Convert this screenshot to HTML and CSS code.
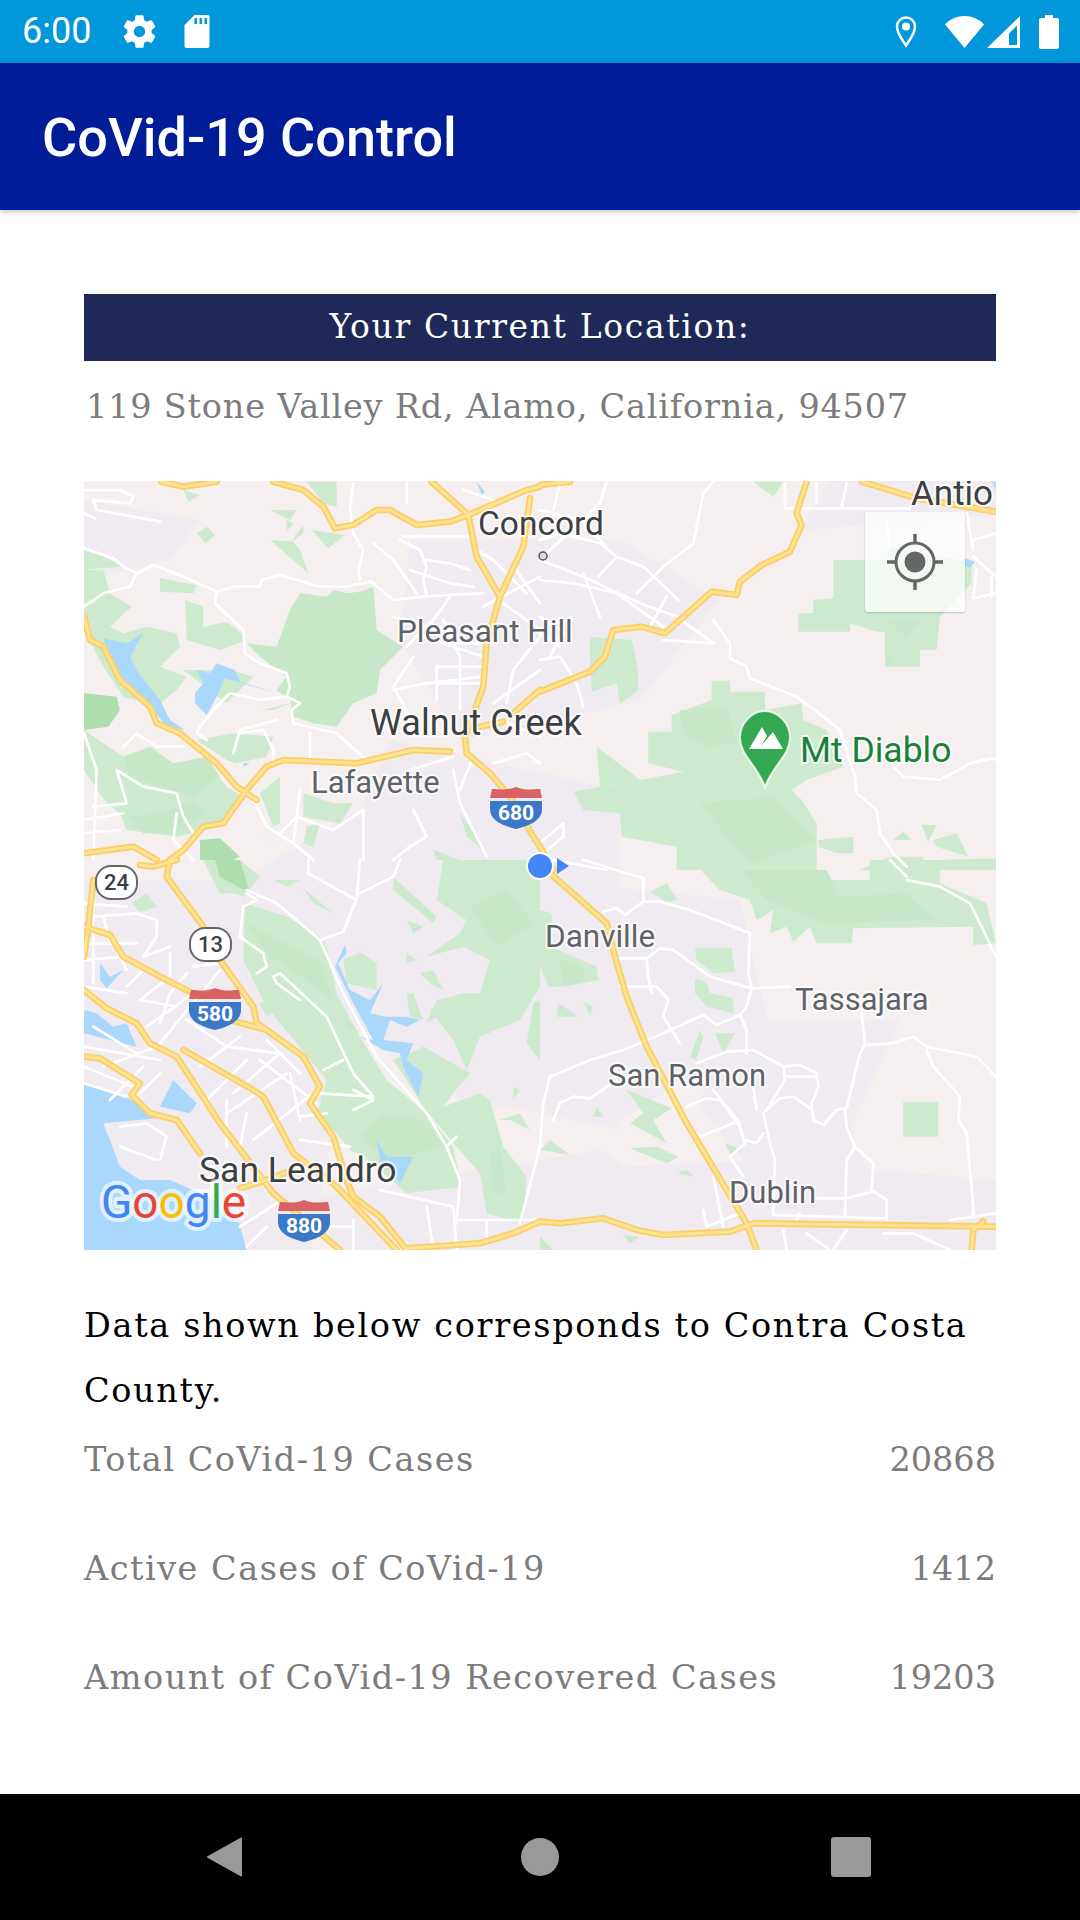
FILE: index.html
```html
<!DOCTYPE html>
<html lang="en">
<head>
<meta charset="utf-8">
<title>CoVid-19 Control</title>
<link rel="stylesheet" href="styles.css">
</head>
<body>
<div class="status">
  <div class="status-left">
    <span class="clock">6:00</span>
    <svg class="ic-gear" viewBox="0 0 24 24"><path d="M19.43 12.98c.04-.32.07-.64.07-.98s-.03-.66-.07-.98l2.11-1.65c.19-.15.24-.42.12-.64l-2-3.46c-.12-.22-.39-.3-.61-.22l-2.49 1c-.52-.4-1.08-.73-1.69-.98l-.38-2.65A.49.49 0 0 0 14 2h-4c-.25 0-.46.18-.49.42l-.38 2.65c-.61.25-1.17.59-1.69.98l-2.49-1c-.23-.09-.49 0-.61.22l-2 3.46c-.13.22-.07.49.12.64l2.11 1.65c-.04.32-.07.65-.07.98s.03.66.07.98l-2.11 1.65c-.19.15-.24.42-.12.64l2 3.46c.12.22.39.3.61.22l2.49-1c.52.4 1.08.73 1.69.98l.38 2.65c.03.24.24.42.49.42h4c.25 0 .46-.18.49-.42l.38-2.65c.61-.25 1.17-.59 1.69-.98l2.49 1c.23.09.49 0 .61-.22l2-3.46c.12-.22.07-.49-.12-.64l-2.11-1.65zM12 15.5a3.5 3.5 0 1 1 0-7 3.5 3.5 0 0 1 0 7z"/></svg>
    <svg class="ic-sd" viewBox="0 0 25 33"><path fill-rule="evenodd" d="M10 0h13a2 2 0 0 1 2 2v29a2 2 0 0 1-2 2H2a2 2 0 0 1-2-2V10zM10 3v6h2.500V3zM15 3v6h2.500V3zM20 3v6h2.500V3z"/></svg>
  </div>
  <div class="status-right">
    <svg class="ic-pin" viewBox="0 0 22 33"><path class="ic-line" d="M11 30.500C7 24.500 2 18.500 2 11.500a9 9 0 0 1 18 0c0 7-5 13-9 19z"/><circle cx="11" cy="11.500" r="4"/></svg>
    <svg class="ic-wifi" viewBox="0 0 39 33"><path d="M0 9.500C5 4 12 1 19.500 1S34 4 39 9.500L19.500 33z"/></svg>
    <svg class="ic-signal" viewBox="0 0 33 32"><path fill-rule="evenodd" d="M33 0v32H0zM30 9.500L22 17.500V29h8z"/></svg>
    <svg class="ic-batt" viewBox="0 0 20 34"><path d="M6 0h8v3h4a2 2 0 0 1 2 2v27a2 2 0 0 1-2 2H2a2 2 0 0 1-2-2V5a2 2 0 0 1 2-2h4z"/></svg>
  </div>
</div>

<header class="appbar"><h1 class="title">CoVid-19 Control</h1></header>

<main class="content">
  <h2 class="loc-head">Your Current Location:</h2>
  <p class="address">119 Stone Valley Rd, Alamo, California, 94507</p>

  <div class="map">
    <svg class="map-svg" viewBox="84 481 912 769">
      <defs>
        <g id="hw">
          <path transform="translate(60 470) scale(.3333)" d="M305 35 370 50 470 35M640 35 730 60 790 110 825 175 880 165 950 120 990 120 1070 165 1170 155 1225 135 1400 60 1440 50M1115 35 1225 135 1250 260 1320 380 1280 520 1270 650 1215 800 1220 850 1290 910 1350 980 1420 1100 1440 1130M1410 85 1390 230 1320 380M72 440 90 510 130 530 180 630 270 710 290 760 360 790 470 880 530 950 590 990M1170 845 1060 840 890 880 670 870 620 890 560 960 490 1060 430 1070 370 1140 330 1170M72 1150 220 1130 290 1170M1440 660 1360 730M1260 770 1330 755"/>
          <path transform="translate(540 470) scale(.3333)" d="M0 45 90 35M800 35 770 130 785 165 750 245 665 285 600 335 590 375 515 365 375 490 305 470 220 480 195 560 150 605 0 665M965 35 1130 85 1368 125M0 1130 40 1200"/>
          <path transform="translate(60 860) scale(.3333)" d="M72 200 150 225 190 290 300 350 390 395M330 0 320 50 430 200M480 300 580 440 590 490 620 510 730 590 780 680 750 730 820 830 860 960 880 1010 960 1070 1040 1170M510 480 620 510M100 60 85 200 72 290M72 390 140 445 230 490 270 550 350 590 480 790 640 1000 840 1170M370 570 580 690 610 710 700 880 830 980 1010 1170M72 590 120 595 240 670 215 705 270 760 350 780 420 880M540 985 620 960 700 930M1040 1165 1260 1150 1360 1120 1440 1085M240 15 280 20 350 0"/>
          <path transform="translate(540 860) scale(.3333)" d="M30 40 110 110 200 190 225 290 260 410 320 560 440 790 560 990 620 1090 650 1170M0 1085 60 1090 190 1075 290 1110 370 1125 570 1115 640 1090 1368 1100M1295 1170 1300 1110 1330 1085"/>
        </g>
      </defs>

      <rect class="land" x="84" y="481" width="912" height="769"/>
      <path class="urban" d="M84 500 200 520 170 560 84 580zM410 540 620 540 720 600 640 700 560 720 460 740 400 640zM390 740 620 790 620 1130 420 1090 300 960 240 880 360 810zM84 880 270 880 350 1040 310 1250 84 1250zM350 900 540 880 740 900 770 1030 620 1120 500 1100zM760 1160 996 1180 996 1250 560 1250 560 1170zM830 481 996 481 996 515 800 530 830 481zM900 1020 850 1130 880 1200 770 1190 700 1110 720 1020zM300 1200 600 1150 700 1220 560 1250 340 1250z"/>

      <g class="green">
        <path transform="translate(60 470) scale(.3333)" d="M72 240 130 260 190 290 120 295 72 300zM72 300 130 300 150 370 215 410 150 470 190 490 260 470 350 490 360 530 300 590 380 620 350 660 300 700 260 700 190 680 130 590 72 480zM300 325 410 345 400 370 300 365zM375 390 430 410 430 470 500 455 545 490 560 510 480 540 380 510zM410 190 440 170 465 195 437 220zM630 120 710 120 690 150zM680 150 700 160 680 185zM730 165 695 215 730 190zM755 180 855 195 805 235zM630 210 700 215 720 240 745 310zM370 60 385 95 420 75zM740 35 830 35 830 110 790 100zM190 900 240 860 350 900 460 900 500 950 550 980 500 1050 440 1080 350 1100 200 1080 180 1030zM370 600 420 600 510 600 580 620 500 700zM410 810 520 790 640 800 620 860 530 880 500 870zM610 720 690 700 640 720zM600 970 660 920 660 1060 640 1070zM730 970 820 1000 880 1000 840 1060 730 1040zM600 1100 690 1130 660 1120zM740 1070 780 1060 760 1130 730 1120zM1120 1140 1200 1170 1130 1170zM1200 1030 1250 1100 1280 1150 1220 1100zM72 780 190 860 300 860 200 900 180 1030 140 1000 72 900z"/>
        <path transform="translate(540 470) scale(.3333)" d="M880 270 1040 270 1050 230 1295 280 1295 340 1200 440 1190 540 1140 540 1140 590 1035 590 1035 485 1010 485 930 460 930 485 775 485 775 430 820 430 820 390 880 385zM325 785 395 785 395 735 515 690 515 632 570 632 570 665 675 665 675 720 785 700 790 750 860 780 910 890 800 930 755 960 785 990 830 1060 830 1200 410 1200 410 1130 245 1100 240 1030 130 1020 100 965 300 930 430 905 325 880zM150 500 275 510 295 600 295 660 240 700 230 640 155 665 150 560zM640 35 730 35 700 80 660 50zM170 830 300 930 180 950zM1060 1110 1115 1110 1090 1085zM1145 1065 1190 1065 1165 1115zM1180 1110 1250 1090 1285 1160 1190 1130zM960 1200 1050 1160 1150 1160 1150 1200zM1195 1170 1368 1165 1368 1200 1195 1200zM835 1110 940 1100 940 1150 890 1150 835 1130z"/>
        <path transform="translate(60 860) scale(.3333)" d="M430 0 540 0 600 50 550 110 520 100 480 100zM555 130 680 170 780 230 800 260 830 400 900 530 980 660 1100 760 1180 860 1200 960 1050 1000 980 920 870 870 830 820 770 770 800 660 620 440 550 300zM640 60 720 60 680 80zM730 85 820 160 760 130zM1000 50 1130 170 1120 190 1000 90zM1150 0 1440 0 1440 380 1380 480 1260 530 1220 630 1180 540 1110 450 1200 400 1260 400 1290 300 1210 260 1100 290 1200 220 1220 180 1130 120zM850 300 900 275 950 310 950 390 860 370zM1040 180 1090 200 1060 220zM1040 280 1070 300 1040 310zM1080 340 1120 330 1150 390 1110 370zM1040 400 1060 400 1090 480 1050 470zM1130 420 1230 400 1100 490zM1000 600 1090 560 1230 640 1180 700 1150 740 1260 700 1290 720 1330 860 1400 950 1390 1090 1280 1060 1260 940 1180 850 1090 740 1040 660zM215 130 260 100 290 140 240 155zM600 430 650 415 640 460 620 470zM700 410 760 450 800 510 770 550 720 480zM790 630 870 600 880 660 830 650zM780 710 880 690 905 720 840 750 790 750zM1320 780 1380 760 1410 810 1350 780zM1360 680 1380 690 1360 720zM1420 430 1440 420 1440 600 1400 550zM880 800 960 740 1100 800 1180 880 1200 980 1040 1000 900 880z"/>
        <path transform="translate(540 860) scale(.3333)" d="M470 0 800 0 860 60 990 60 990 0 1200 0 1200 70 1340 130 1368 250 1300 255 1300 200 940 205 935 250 830 250 810 200 760 245 740 200 690 220 700 150 650 180 630 120 540 90 490 40zM0 150 35 160 35 260 170 320 175 360 70 380 25 380 0 320zM465 265 575 265 585 335 520 340 470 300zM465 355 500 365 510 400 580 415 580 460 500 440 465 400zM1090 725 1195 725 1195 830 1090 830zM260 690 395 745 340 780 380 850 270 790 310 760zM160 770 190 770 170 740zM0 870 30 840 90 885zM270 865 350 860 415 890 380 910zM410 940 440 930 465 950zM55 430 115 470 50 470zM130 425 160 440 150 465zM450 590 480 510 490 530 470 600zM525 520 585 520 550 580zM555 850 610 870 570 880zM330 95 380 70 400 100 410 120 380 125zM250 1125 300 1130 270 1150zM0 1130 40 1170 0 1170z"/>
      </g>
      <g class="green-dark">
        <path transform="translate(60 470) scale(.3333)" d="M650 530 690 420 720 370 800 380 820 360 860 370 900 365 940 350 950 480 1030 530 960 600 950 670 880 700 830 770 760 760 700 740 690 690 650 660 680 620 600 560 560 520zM270 830 340 880 440 860 480 920 400 980 300 950 210 920 190 860zM200 1040 300 1030 400 990 440 1030 350 1090 250 1090z"/>
        <path transform="translate(540 470) scale(.3333)" d="M420 720 560 710 590 820 500 830 430 790zM480 1000 700 980 780 1060 830 1110 640 1180 560 1100zM1040 450 1140 450 1100 500zM1040 560 1070 560 1040 590z"/>
        <path transform="translate(60 860) scale(.3333)" d="M1230 140 1340 90 1420 190 1310 260zM560 190 780 300 820 420 620 280zM960 760 1100 780 1150 860 1000 900 900 840zM850 470 900 520 860 500zM1290 880 1320 860 1340 1000 1300 1000z"/>
        <path transform="translate(540 860) scale(.3333)" d="M600 30 860 30 900 110 1100 100 1180 180 850 190 680 120zM60 300 130 320 130 370 70 370z"/>
      </g>
      <g class="green-deep">
        <path transform="translate(60 470) scale(.3333)" d="M72 670 170 680 180 720 145 770 72 780zM420 1110 480 1105 540 1160 520 1170 420 1170z"/>
        <path transform="translate(60 860) scale(.3333)" d="M465 0 540 0 570 100 480 50z"/>
      </g>

      <g class="water">
        <path transform="translate(60 470) scale(.3333)" d="M130 505 200 520 250 490 210 560 235 610 300 690 330 750 375 780 320 770 280 720 240 680 165 620zM410 600 450 610 470 580 525 600 540 635 620 660 650 670 495 625 465 690 440 735 405 700 405 670 430 640zM1250 35 1275 65 1265 75zM550 880 570 880 550 890z"/>
        <path transform="translate(540 470) scale(.3333)" d="M1275 265 1305 275 1290 295 1265 280zM1355 35 1368 35 1368 60z"/>
        <path transform="translate(60 860) scale(.3333)" d="M72 665 130 690 205 715 280 760 340 770 130 790 180 920 240 960 330 960 420 1000 530 1060 560 1170 72 1170zM72 450 110 460 160 500 200 490 230 560 150 540 72 520zM300 740 340 660 410 730 390 760zM855 255 860 280 835 310 870 390 930 420 970 370 930 460 975 470 1040 470 1080 480 1040 500 990 480 970 540 1060 550 1040 600 1090 640 1075 710 1030 620 1020 580 970 570 900 530 940 540 880 430 825 320zM120 310 150 350 190 330 140 385 120 360zM950 840 980 890 1060 890 1020 970 960 900z"/>
      </g>

      <g class="roads">
        <path transform="translate(60 470) scale(.3333)" d="M72 235 160 265 190 290 230 310 210 350 130 370 72 410M230 310 280 285 370 320 470 365 520 350 600 350 605 330 660 315 780 350 860 350 935 335 1000 390 1090 380 1165 375 1270 370M470 370 465 400 550 480 555 550 600 580 680 610 690 650 680 680 720 700 695 720 700 760 830 790 920 870M680 680 600 690 510 670 470 710 420 770 410 790 440 810M750 790 750 880M520 850 540 780 650 750M540 790 610 780 640 840 640 880M190 830 230 790 290 830 370 830M72 60 180 60 220 80 210 100 100 90 110 120 300 155M72 130 105 145M880 40 870 110 880 190 910 240 895 300 900 330M1020 210 1080 240 1100 290 1090 330 1100 380M1030 200 1240 200M1100 270 1170 280 1230 300M940 220 1000 270 1070 370M1170 380 1120 450 1040 530M1130 590 1270 590M1130 640 1270 640M1200 560 1200 720M1130 590 1130 690M1000 660 1100 640 1270 620M1060 560 1000 650 1050 740M1150 520 1280 520M1400 370 1300 270 1250 240M1440 500 1360 600 1340 700M1440 600 1300 700M580 990 620 1070 700 1120 760 1170M700 1120 720 960M660 1090 710 1040 820 1080 910 1020 910 1170M1000 1170 1050 1130 1100 1100 1060 1020M1180 900 1200 1000 1280 1160M72 790 110 900 100 1170M72 1050 190 1030M72 1090 180 1080M100 1010 200 1000 170 900 250 950 350 970 370 1040 400 1090M350 1030 340 1110 400 1170M1210 60 1300 90M1040 35 1040 100M1000 440 1100 470 1270 480M1050 300 1170 340 1240 350M1090 500 1270 560M1150 450 1200 560M1270 410 1440 320M1360 290 1440 400M1330 400 1440 480M1300 740 1440 800M1240 860 1200 960M1180 860 1050 900M1300 880 1400 850 1440 880"/>
        <path transform="translate(540 470) scale(.3333)" d="M200 35 180 100 20 250M520 35 490 70 460 220 370 290 290 370M0 270 130 320 300 400 410 440 520 520M0 330 100 340 230 370 370 470M130 310 180 440M0 210 60 190 180 220 230 260 175 320M230 260 310 290 415 390M380 380 330 470M520 450 570 520 570 565 620 590 630 625 770 680 850 740 900 780 945 920 950 970 1010 1020 1020 1090 1060 1150 1100 1190M0 570 60 560 110 640 130 710M370 510 520 520M735 115 1110 115M735 40 735 110M830 40 830 100M920 40 905 110M1040 150 1050 230M1280 130 1300 240M1300 210 1368 190M1300 260 1368 320M1310 300 1300 385 1368 370M1355 320 1355 380M1060 890 1090 920 1200 930 1290 880 1355 865 1368 870M0 1120 70 1060 70 1100 0 1160M40 1170 200 1200M0 120 120 150 200 230M60 40 40 120M0 440 90 500M90 440 30 560M0 490 60 530"/>
        <path transform="translate(60 860) scale(.3333)" d="M560 90 650 130 780 240 850 400 950 590 1100 760 1160 860 1190 830M1160 860 1200 960 1190 1090M780 240 850 215 880 140 890 120 745 40 745 0M890 120 900 0M900 100 1000 50 1020 0M560 100 590 120 550 140 540 230 610 280 620 320 590 340M640 350 660 340 800 470 880 640 940 710 780 700M640 350 650 370 720 420M72 620 220 680M72 670 200 710M100 100 100 370M72 250 230 250M100 170 230 160 290 180 290 230 250 290 330 260M72 380 200 400M200 380 250 330M330 280 330 350 240 420M380 340 330 400 300 490M400 320 480 310M380 480 500 560 660 580M300 550 480 330M540 530 420 620M560 600 430 730M660 580 520 700M620 540 720 640M600 600 770 730M500 720 500 860M560 760 540 860M500 760 680 640M580 840 760 700M690 640 720 780M720 770 800 760M720 840 870 860M790 630 850 600M880 690 940 720 880 750M180 800 260 790 320 830 300 900M180 860 290 900M540 1100 650 1030M560 1160 620 1100M720 1100 880 1100M880 1080 880 1170M960 990 1180 1040 1190 1170M1100 1040 1120 1170M1200 1080 1440 1080M1280 1080 1280 1150M1380 1090 1440 860M72 130 200 140M130 170 150 250M72 300 200 290M160 250 200 330M240 420 350 440M260 500 400 400M100 500 230 580M72 560 300 600M130 620 290 560M250 620 150 720M300 640 230 710"/>
        <path transform="translate(540 860) scale(.3333)" d="M130 0 310 55 310 125 255 165 230 145 190 155M310 125 360 125 450 150 630 220 625 340 635 385 750 380M360 265 400 270 510 350 635 385M635 385 620 440 600 465 620 510 620 580M600 465 530 495 490 465 380 515 250 570M240 380 350 380 385 420 370 470 420 550M320 300 325 350 335 400M240 295 320 295 360 265M250 570 150 600 30 650 10 730 0 860M60 730 100 710 150 715 230 660M60 730 40 780M470 610 560 575 640 570 730 620 735 660 680 750M730 620 780 615 830 640 835 680 815 730 820 780 850 795 890 750 915 745M735 650 830 650M920 745 960 580 975 555 965 460M975 555 1060 550 1120 530 1160 560 1310 590 1368 650M1160 570 1180 620 1260 710 1255 780 1280 820 1300 1040M915 745 920 800 945 860 1000 910 995 990 1040 1020 1040 1080M945 860 920 900 915 1070M1000 995 920 1015 830 1015M520 690 600 790M670 760 690 850 705 900 700 1060M650 750 640 680M670 760 720 715 760 710 810 745M440 740 500 715 540 720 600 800 615 850 570 890M480 830 580 790M570 890 610 950M615 840 650 850 670 820M520 950 540 1050 550 1100M490 1050 500 1100 600 1060M1230 1080 1368 1060M1300 1040 1300 1070M700 1065 1040 1075M780 1060 770 1080M730 1110 740 1170M800 1120 870 1170M880 1170 920 1110M1030 1120 1120 1120 1230 1170M1100 60 1200 80 1290 130 1320 190 1368 290M1050 0 1100 50"/>
      </g>

      <use href="#hw" class="hw-out"/>
      <use href="#hw" class="hw-in"/>

      <g class="lbl">
        <text class="lbl-dark" x="478" y="535" font-size="33.500">Concord</text>
        <text x="397" y="642" font-size="31.500">Pleasant Hill</text>
        <text class="lbl-dark" x="370" y="735" font-size="36">Walnut Creek</text>
        <text x="311" y="793" font-size="31">Lafayette</text>
        <text class="lbl-dark" x="911" y="505" font-size="35">Antio</text>
        <text class="lbl-green" x="800" y="762" font-size="35.500">Mt Diablo</text>
        <text x="545" y="947" font-size="31.500">Danville</text>
        <text x="795" y="1010" font-size="31">Tassajara</text>
        <text x="608" y="1086" font-size="31">San Ramon</text>
        <text x="729" y="1203" font-size="31">Dublin</text>
        <text class="lbl-dark" x="199" y="1182" font-size="35.500">San Leandro</text>
      </g>

      <circle class="poi-dot" cx="543" cy="556" r="4"/>

      <g class="shield" transform="translate(490 787)">
        <path class="sh-blue" d="M0 14H52V22C52 34 38 39 26 42 14 39 0 34 0 22z"/>
        <path class="sh-red" d="M2 2C10 2 16 4 26 0 36 4 42 2 50 2L52 11H0z"/>
        <text x="26" y="33">680</text>
      </g>
      <g class="shield" transform="translate(189 988)">
        <path class="sh-blue" d="M0 14H52V22C52 34 38 39 26 42 14 39 0 34 0 22z"/>
        <path class="sh-red" d="M2 2C10 2 16 4 26 0 36 4 42 2 50 2L52 11H0z"/>
        <text x="26" y="33">580</text>
      </g>
      <g class="shield" transform="translate(278 1200)">
        <path class="sh-blue" d="M0 14H52V22C52 34 38 39 26 42 14 39 0 34 0 22z"/>
        <path class="sh-red" d="M2 2C10 2 16 4 26 0 36 4 42 2 50 2L52 11H0z"/>
        <text x="26" y="33">880</text>
      </g>

      <g class="route" transform="translate(96 866)">
        <rect x="0" y="0" width="41" height="33" rx="15"/>
        <text x="20.500" y="24">24</text>
      </g>
      <g class="route" transform="translate(190 928)">
        <rect x="0" y="0" width="41" height="33" rx="15"/>
        <text x="20.500" y="24">13</text>
      </g>

      <g class="peak" transform="translate(740 710)">
        <path class="peak-pin" d="M0 28C0 13 12 1 25 1S50 13 50 28C50 45 33 55 25 77 17 55 0 45 0 28z"/>
        <path class="peak-mt" d="M9 39 22 17 27 26 21 36 33 22 43 39z"/>
      </g>

      <text class="google" x="101" y="1218"><tspan class="g-b">G</tspan><tspan class="g-r">o</tspan><tspan class="g-y">o</tspan><tspan class="g-b">g</tspan><tspan class="g-g">l</tspan><tspan class="g-r">e</tspan></text>

      <path class="me-arrow" d="M557 858 569 866 557 874z"/>
      <circle class="me-dot" cx="540" cy="866" r="13"/>
    </svg>
    <button class="locate" type="button" aria-label="My location">
      <svg class="locate-ic" viewBox="0 0 56 56">
        <circle class="locate-ring" cx="28" cy="28" r="19"/>
        <circle cx="28" cy="28" r="10.500"/>
        <path class="locate-tick" d="M28 0V9M28 47V56M0 28H9M47 28H56"/>
      </svg>
    </button>
  </div>

  <p class="county">Data shown below corresponds to Contra Costa County.</p>

  <div class="stats">
    <div class="stat"><span class="stat-label">Total CoVid-19 Cases</span><span class="stat-value">20868</span></div>
    <div class="stat"><span class="stat-label">Active Cases of CoVid-19</span><span class="stat-value">1412</span></div>
    <div class="stat"><span class="stat-label">Amount of CoVid-19 Recovered Cases</span><span class="stat-value">19203</span></div>
  </div>
</main>

<nav class="navbar">
  <svg class="nav-back" viewBox="0 0 38 42"><path d="M35 2.500V39.500L2 21z"/></svg>
  <span class="nav-home"></span>
  <span class="nav-recent"></span>
</nav>
</body>
</html>
```
FILE: styles.css
```css
* { box-sizing: border-box; }
html, body { margin: 0; padding: 0; }
body {
  width: 1080px;
  height: 1920px;
  display: flex;
  flex-direction: column;
  background: #fff;
  font-family: "DejaVu Serif", serif;
  overflow: hidden;
}

/* status bar */
.status {
  height: 63px;
  flex: none;
  background: #0296db;
  display: flex;
  align-items: center;
  justify-content: space-between;
  color: #fff;
  fill: #fff;
}
.status-left { display: flex; align-items: center; padding-left: 22px; }
.clock { font: 36px Roboto, sans-serif; width: 70px; line-height: 63px; }
.ic-gear { width: 39px; height: 39px; margin-left: 28px; }
.ic-sd { width: 26px; height: 33px; margin-left: 25px; }
.status-right { display: flex; align-items: center; padding-right: 21px; }
.ic-pin { width: 22px; height: 33px; }
.ic-line { fill: none; stroke: #fff; stroke-width: 2.500; }
.ic-wifi { width: 39px; height: 33px; margin-left: 28px; }
.ic-signal { width: 33px; height: 32px; margin-left: 3px; }
.ic-batt { width: 20px; height: 34px; margin-left: 19px; }

/* app bar */
.appbar {
  height: 147px;
  flex: none;
  background: #001c96;
  box-shadow: 0 2px 5px rgba(0, 0, 0, .22);
  display: flex;
  align-items: center;
  padding-left: 42px;
  position: relative;
}
.title {
  margin: 0;
  padding-top: 3px;
  font: 500 54px/1 Roboto, sans-serif;
  color: #fff;
}

/* content */
.content {
  flex: 1;
  padding: 84px 84px 0;
  min-height: 0;
}
.loc-head {
  margin: 0;
  height: 67px;
  background: #1f2957;
  color: #fff;
  font-weight: 400;
  font-size: 33px;
  letter-spacing: 1.650px;
  line-height: 66px;
  text-align: center;
}
.address {
  margin: 0;
  height: 120px;
  padding: 2px 0 0 2px;
  font-size: 33.500px;
  letter-spacing: .800px;
  line-height: 88px;
  color: #7c7c7c;
  white-space: nowrap;
}

/* map */
.map {
  position: relative;
  width: 912px;
  height: 769px;
  overflow: hidden;
}
.map-svg { display: block; width: 912px; height: 769px; }
.land { fill: #f5eff0; }
.urban { fill: #efebf0; }
.green { fill: #cdeacf; }
.green-dark { fill: #c7e7c9; }
.green-deep { fill: #aeddae; }
.water { fill: #aad8fd; }
.roads { fill: none; stroke: #fff; stroke-width: 8; stroke-linejoin: round; stroke-linecap: round; }
.hw-out { fill: none; stroke: #fbcf68; stroke-width: 20; stroke-linejoin: round; stroke-linecap: round; }
.hw-in { fill: none; stroke: #fde293; stroke-width: 9; stroke-linejoin: round; stroke-linecap: round; }
.lbl text {
  font-family: Roboto, sans-serif;
  fill: #5f6368;
  stroke: rgba(255, 255, 255, .75);
  stroke-width: 4px;
  paint-order: stroke;
  stroke-linejoin: round;
}
.lbl .lbl-dark { fill: #3c4043; }
.lbl .lbl-green { fill: #188038; }
.poi-dot { fill: #ddd; stroke: #555; stroke-width: 1.500; }
.shield text {
  font: 700 21px Roboto, sans-serif;
  fill: #fff;
  text-anchor: middle;
}
.sh-blue { fill: #3c78c8; }
.sh-red { fill: #d96262; }
.route rect { fill: #fff; stroke: #666; stroke-width: 2px; }
.route text {
  font: 500 22px Roboto, sans-serif;
  fill: #3c4043;
  text-anchor: middle;
}
.peak-pin { fill: #34a853; stroke: #fff; stroke-opacity: .8; stroke-width: 2px; }
.peak-mt { fill: #fff; }
.google {
  font: 400 46px Roboto, sans-serif;
  stroke: rgba(255, 255, 255, .65);
  stroke-width: 8px;
  paint-order: stroke;
  stroke-linejoin: round;
}
.g-b { fill: #4285f4; }
.g-r { fill: #ea4335; }
.g-y { fill: #fbbc05; }
.g-g { fill: #34a853; }
.me-dot { fill: #4285f4; stroke: #fff; stroke-width: 2px; }
.me-arrow { fill: #4285f4; }

.locate {
  position: absolute;
  left: 781px;
  top: 31px;
  width: 100px;
  height: 100px;
  padding: 0;
  border: 0;
  border-radius: 3px;
  background: rgba(255, 255, 255, .72);
  box-shadow: 0 1px 2px rgba(0, 0, 0, .2);
  display: flex;
  align-items: center;
  justify-content: center;
}
.locate-ic { width: 56px; height: 56px; fill: #666; }
.locate-ring { fill: none; stroke: #666; stroke-width: 3px; }
.locate-tick { fill: none; stroke: #666; stroke-width: 3.500px; }

/* data */
.county {
  margin: 43px 0 0;
  font-size: 33.500px;
  letter-spacing: 1.650px;
  line-height: 65px;
  color: #000;
}
.stats { display: flex; flex-direction: column; padding-top: 13px; }
.stat {
  height: 109px;
  display: flex;
  justify-content: space-between;
  color: #7c7c7c;
  font-size: 33.500px;
  line-height: 48px;
}
.stat-label { letter-spacing: 1.500px; }

/* nav */
.navbar {
  height: 126px;
  flex: none;
  background: #000;
  display: grid;
  grid-template-columns: 40px 40px 40px;
  justify-content: start;
  column-gap: 273px;
  align-items: center;
  justify-items: center;
  padding-left: 205px;
}
.nav-back { width: 38px; height: 42px; fill: #999; stroke: #999; stroke-width: 2px; stroke-linejoin: round; }
.nav-home { width: 38px; height: 38px; border-radius: 50%; background: #999; margin-left: 4px; }
.nav-recent { width: 40px; height: 40px; border-radius: 3px; background: #999; }
```
